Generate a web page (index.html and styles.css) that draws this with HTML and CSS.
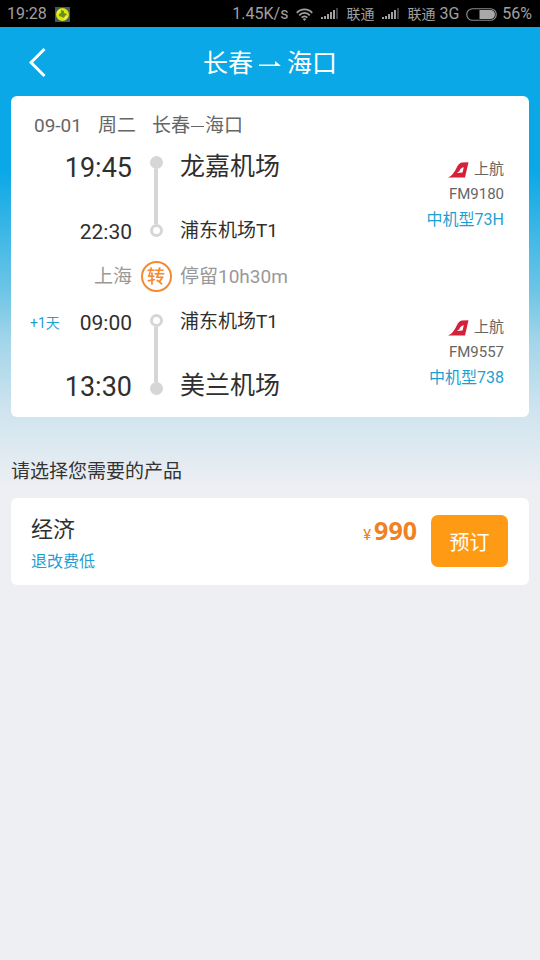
FILE: index.html
```html
<!DOCTYPE html>
<html lang="zh-CN">
<head>
<meta charset="utf-8">
<meta name="viewport" content="width=device-width, initial-scale=1">
<title>长春 - 海口</title>
<link rel="stylesheet" href="styles.css">
</head>
<body>
<svg class="defs" width="0" height="0" aria-hidden="true">
  <symbol id="signal" viewBox="0 0 17 12">
    <path fill="#a0a0a0" d="M0 9h2v2H0zM3 8h2v3H3zM6 6h2v5H6zM9 4h2v7H9zM12 2h2v9h-2z"/>
    <path fill="#404040" d="M15 0h2v11h-2z"/>
  </symbol>
  <symbol id="tail" viewBox="0 0 21 16">
    <path fill="#d5203a" d="M0 15.500C4 14 6.500 10 8.500 6 10 3 11.500 .8 14 .6L20.500 .3 17 15.500z"/>
    <path fill="#fff" d="M9 11c.8-1 1.500-1.200 2.300-1.500.5-2.500 2-3.500 4.500-4.200L14.500 10.500z"/>
  </symbol>
</svg>
<div class="status">
  <span>19:28</span>
  <svg class="status-app" width="15" height="15" viewBox="0 0 15 15" aria-hidden="true">
    <path fill="#356060" d="M0 0h15v15H0z"/>
    <circle cx="7.500" cy="7.500" r="6.500" fill="#e5df12"/>
    <path fill="#5c9420" d="M6 3l3 1v2l3 1-2 2-1 2-2-1-3-1V7l2-1z"/>
    <path fill="#f3ee45" d="M2 5 5 2l1 1-3 4zM11 9l2 0-3 4-2-1z"/>
  </svg>
  <span class="status-speed">1.45K/s</span>
  <svg class="status-wifi" width="17" height="13" viewBox="0 0 17 13" fill="none" stroke="#a0a0a0" stroke-width="1.800" aria-hidden="true">
    <path d="M.8 4.800C5 .2 12 .2 16.200 4.800M3.200 7.300c3-3.200 7.600-3.200 10.600 0M5.700 9.700c1.600-1.700 4-1.700 5.600 0"/>
    <path fill="#a0a0a0" stroke="none" d="m6.800 11 1.700 2 1.700-2c-1-.9-2.400-.9-3.400 0z"/>
  </svg>
  <svg class="status-signal" width="17" height="12" aria-hidden="true"><use href="#signal"/></svg>
  <span class="carrier">联通</span>
  <svg class="status-signal" width="17" height="12" aria-hidden="true"><use href="#signal"/></svg>
  <span><span class="carrier">联通</span> 3G</span>
  <svg class="status-battery" width="31" height="13" viewBox="0 0 31 13" aria-hidden="true">
    <rect x=".75" y=".75" width="29.500" height="11.500" rx="5.750" fill="none" stroke="#8c8c8c" stroke-width="1.200"/>
    <path fill="#a8a8a8" d="M13.500 2h11a4.500 4.500 0 0 1 0 9h-11z"/>
  </svg>
  <span>56%</span>
</div>

<header class="topbar">
  <button class="back" type="button" aria-label="返回">
    <svg width="17" height="29" viewBox="0 0 17 29" fill="none" stroke="#fff" stroke-width="3" aria-hidden="true"><path d="M15.500 1 2 14.500 15.500 28"/></svg>
  </button>
  <h1 class="route">
    <span>长春</span>
    <svg width="22" height="8" viewBox="0 0 22 8" aria-label="至"><path fill="#fff" d="M0 4.500h16V1l5.500 4.500V6H0z"/></svg>
    <span>海口</span>
  </h1>
  <span></span>
</header>

<main class="content">
  <section class="card trip">
    <h2 class="trip-head"><span>09-01</span><span>周二</span><span class="trip-route">长春<i class="dash"></i>海口</span></h2>

    <div class="leg leg-out">
      <div class="times"><span class="big">19:45</span><span class="small">22:30</span></div>
      <div class="track"><i class="dot full"></i><i class="line"></i><i class="dot"></i></div>
      <div class="places"><span class="major">龙嘉机场</span><span class="minor">浦东机场T1</span></div>
      <div class="flight">
        <span class="airline"><svg width="21" height="16" aria-hidden="true"><use href="#tail"/></svg>上航</span>
        <span>FM9180</span>
        <a class="plane" href="#plane-73h">中机型73H</a>
      </div>
    </div>

    <div class="transfer">
      <span class="city">上海</span><span class="badge">转</span><span class="stay">停留10h30m</span>
    </div>

    <div class="leg leg-in">
      <div class="times"><span class="small"><span class="next-day">+1天</span>09:00</span><span class="big">13:30</span></div>
      <div class="track"><i class="dot"></i><i class="line"></i><i class="dot full"></i></div>
      <div class="places"><span class="minor">浦东机场T1</span><span class="major">美兰机场</span></div>
      <div class="flight">
        <span class="airline"><svg width="21" height="16" aria-hidden="true"><use href="#tail"/></svg>上航</span>
        <span>FM9557</span>
        <a class="plane" href="#plane-738">中机型738</a>
      </div>
    </div>
  </section>

  <h2 class="choose">请选择您需要的产品</h2>

  <section class="card product">
    <div class="product-info">
      <h3 class="cabin">经济</h3>
      <a class="policy" href="#policy">退改费低</a>
    </div>
    <div class="price"><span class="yen">¥</span>990</div>
    <button class="book" type="button">预订</button>
  </section>
</main>
</body>
</html>
```
FILE: styles.css
```css
* { box-sizing: border-box; }

body {
  margin: 0;
  min-height: 100vh;
  font-family: Roboto, "Noto Sans CJK SC", sans-serif;
  color: #2f2f2f;
  background: #eeeff3 linear-gradient(#0aa8e6 0, #0aa8e6 170px, #6cc5e6 290px, #a2d5e9 340px, #cfe4ef 410px, #eeeff3 490px) no-repeat;
}

h1, h2, h3 { margin: 0; font-weight: 400; }
a { text-decoration: none; }
button { border: 0; font-family: inherit; cursor: pointer; }
svg { flex: none; }
.defs { position: absolute; }

.status {
  display: flex;
  align-items: center;
  height: 27px;
  padding: 1px 8px 0 7px;
  background: #000;
  color: #a0a0a0;
  font-size: 16px;
  line-height: 26px;
  white-space: nowrap;
}
.carrier { font-size: 14px; }
.status-app { margin-left: 8px; }
.status-speed { margin-left: auto; }
.status-wifi { margin: 0 8px; }
.status-signal { margin-right: 8px; }
.carrier + .status-signal { margin-left: 8px; }
.status-battery { margin: 0 5px 0 7px; }

.topbar {
  display: grid;
  grid-template-columns: 1fr auto 1fr;
  align-items: center;
  height: 69px;
  padding: 2px 19px 0;
  color: #fff;
}
.back {
  display: flex;
  width: 40px;
  padding: 10px;
  background: none;
}
.route {
  display: flex;
  align-items: center;
  gap: 6px;
  padding-top: 2px;
  font-size: 25px;
  line-height: 36px;
}

.content { padding: 0 11px 24px; }
.card { background: #fff; border-radius: 6px; }

.trip { padding: 15px 25px 14px 19px; }
.trip-head {
  display: flex;
  gap: 16px;
  margin-bottom: 9px;
  padding-left: 4px;
  font-size: 19px;
  line-height: 30px;
  color: #666;
}
.trip-route { display: flex; align-items: center; }
.dash { width: 13px; height: 1px; margin: 0 1px; background: #666; }

.leg, .transfer {
  display: grid;
  grid-template-columns: 102px 48px 1fr auto;
}
.times, .places {
  display: flex;
  flex-direction: column;
  justify-content: space-between;
  height: 98px;
  padding-top: 2px;
  line-height: 32px;
  white-space: nowrap;
}
.places { height: 97px; padding-top: 1px; }
.times { text-align: right; }
.times .small { display: flex; justify-content: space-between; }
.leg-out .times .small { justify-content: flex-end; }
.big { font-size: 27px; }
.small { font-size: 21px; }
.major { font-size: 25px; }
.minor { font-size: 19px; }
.next-day { font-size: 14px; color: #1e9fd3; }

.track {
  display: flex;
  flex-direction: column;
  align-items: center;
}
.leg-out .track { padding: 6px 0 11px; }
.leg-in .track { padding: 9px 0 8px; }
.dot {
  width: 13px;
  height: 13px;
  border: 3px solid #d6d6d6;
  border-radius: 50%;
}
.full { background: #d6d6d6; }
.line { flex: 1; width: 4px; background: #d6d6d6; }

.flight {
  display: flex;
  flex-direction: column;
  align-items: flex-end;
  font-size: 15px;
  line-height: 25px;
  color: #666;
}
.leg-out .flight { padding-top: 7px; }
.leg-in .flight { padding-top: 10px; }
.airline { display: flex; align-items: center; gap: 5px; }
.plane { font-size: 16px; color: #1e9fd3; }

.transfer {
  align-items: center;
  margin: 12px 0 13px;
  font-size: 19px;
  line-height: 30px;
  color: #999;
}
.city, .stay { padding-top: 2px; }
.city { text-align: right; }
.badge {
  justify-self: center;
  width: 31px;
  height: 31px;
  border: 2px solid #f58a2e;
  border-radius: 50%;
  font-size: 18px;
  font-weight: 500;
  line-height: 27px;
  text-align: center;
  color: #f58a2e;
}

.choose {
  padding: 40px 0 11px;
  font-size: 19px;
  line-height: 30px;
  color: #333;
}

.product {
  display: flex;
  align-items: flex-start;
  padding: 17px 21px 9px 20px;
}
.product-info { flex: 1; }
.cabin { padding-top: 1px; font-size: 22px; line-height: 28px; }
.policy {
  display: block;
  padding-top: 4px;
  font-size: 16px;
  line-height: 28px;
  color: #1e9fd3;
}
.price {
  margin-right: 14px;
  font: 700 25px/30px "Noto Sans", sans-serif;
  color: #f08223;
}
.yen { margin-right: 3px; font: 400 15px Roboto, sans-serif; }
.book {
  width: 77px;
  height: 52px;
  padding: 0;
  border-radius: 7px;
  background: #ff9a14;
  color: #fff;
  font-size: 20px;
}
```
